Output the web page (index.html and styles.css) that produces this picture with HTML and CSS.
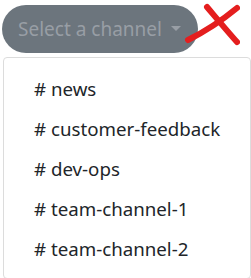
FILE: index.html
```html
<html>
	<head>
		<title>Channel picker</title>
		<link rel="stylesheet" href="styles.css">
	</head>
	<body>
		<div class="picker">
			<div class="toggle">
				<span class="label">Select a channel</span>
				<span class="caret"></span>
			</div>
			<svg class="mark" width="60" height="50" viewBox="0 0 60 50">
				<path d="M8 40 C 22 33, 40 22, 57 8" />
				<path d="M27 7 C 38 20, 48 32, 57 42" />
			</svg>
			<ul class="menu">
				<li># news</li>
				<li># customer-feedback</li>
				<li># dev-ops</li>
				<li># team-channel-1</li>
				<li># team-channel-2</li>
			</ul>
		</div>
	</body>
</html>
```

FILE: styles.css
```css
body,html{
	margin:0;
	padding:0;
	background:#fff;
	font-family:"Segoe UI","Noto Sans","Open Sans",sans-serif;
}
.picker{
	position:relative;
	padding:5px 1px 0 2px;
}
.toggle{
	display:inline-flex;
	align-items:center;
	gap:9px;
	height:48px;
	width:196px;
	box-sizing:border-box;
	padding:0 0 0 16px;
	background:#6c757d;
	border-radius:24px;
}
.label{
	color:#989ea5;
	font-size:19px;
	line-height:24px;
}
.caret{
	width:0;
	height:0;
	border-left:5px solid transparent;
	border-right:5px solid transparent;
	border-top:5px solid #989ea5;
	margin-top:-2px;
}
.mark{
	position:absolute;
	left:180px;
	top:0;
}
.mark path{
	fill:none;
	stroke:#e41e1e;
	stroke-width:6;
	stroke-linecap:round;
}
.menu{
	list-style:none;
	margin:4px 0 0 1px;
	padding:11px 0 9px 0;
	border:1px solid #dcdcdc;
	border-radius:4px;
	box-sizing:border-box;
	width:248px;
}
.menu li{
	height:40px;
	line-height:40px;
	padding-left:30px;
	font-size:18.7px;
	color:#212529;
}
```
